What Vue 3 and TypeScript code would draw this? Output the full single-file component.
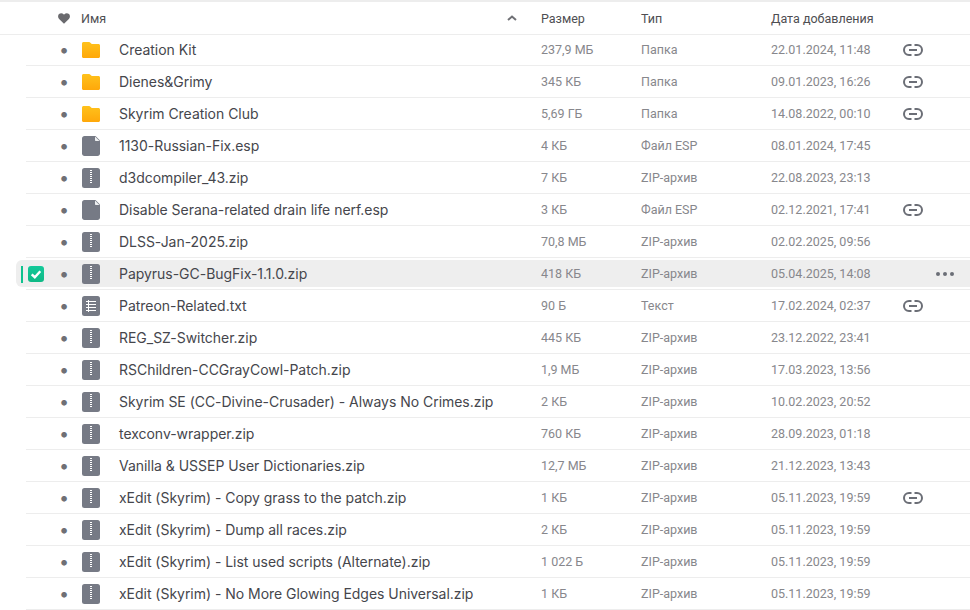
<script setup lang="ts">
type Kind = 'folder' | 'file' | 'zip' | 'text'
interface Row { name: string; size: string; type: string; date: string; kind: Kind; link?: boolean; selected?: boolean }
const rows: Row[] = [
  { name: 'Creation Kit', size: '237,9 МБ', type: 'Папка', date: '22.01.2024, 11:48', kind: 'folder', link: true },
  { name: 'Dienes&Grimy', size: '345 КБ', type: 'Папка', date: '09.01.2023, 16:26', kind: 'folder', link: true },
  { name: 'Skyrim Creation Club', size: '5,69 ГБ', type: 'Папка', date: '14.08.2022, 00:10', kind: 'folder', link: true },
  { name: '1130-Russian-Fix.esp', size: '4 КБ', type: 'Файл ESP', date: '08.01.2024, 17:45', kind: 'file' },
  { name: 'd3dcompiler_43.zip', size: '7 КБ', type: 'ZIP-архив', date: '22.08.2023, 23:13', kind: 'zip' },
  { name: 'Disable Serana-related drain life nerf.esp', size: '3 КБ', type: 'Файл ESP', date: '02.12.2021, 17:41', kind: 'file', link: true },
  { name: 'DLSS-Jan-2025.zip', size: '70,8 МБ', type: 'ZIP-архив', date: '02.02.2025, 09:56', kind: 'zip' },
  { name: 'Papyrus-GC-BugFix-1.1.0.zip', size: '418 КБ', type: 'ZIP-архив', date: '05.04.2025, 14:08', kind: 'zip', selected: true },
  { name: 'Patreon-Related.txt', size: '90 Б', type: 'Текст', date: '17.02.2024, 02:37', kind: 'text', link: true },
  { name: 'REG_SZ-Switcher.zip', size: '445 КБ', type: 'ZIP-архив', date: '23.12.2022, 23:41', kind: 'zip' },
  { name: 'RSChildren-CCGrayCowl-Patch.zip', size: '1,9 МБ', type: 'ZIP-архив', date: '17.03.2023, 13:56', kind: 'zip' },
  { name: 'Skyrim SE (CC-Divine-Crusader) - Always No Crimes.zip', size: '2 КБ', type: 'ZIP-архив', date: '10.02.2023, 20:52', kind: 'zip' },
  { name: 'texconv-wrapper.zip', size: '760 КБ', type: 'ZIP-архив', date: '28.09.2023, 01:18', kind: 'zip' },
  { name: 'Vanilla & USSEP User Dictionaries.zip', size: '12,7 МБ', type: 'ZIP-архив', date: '21.12.2023, 13:43', kind: 'zip' },
  { name: 'xEdit (Skyrim) - Copy grass to the patch.zip', size: '1 КБ', type: 'ZIP-архив', date: '05.11.2023, 19:59', kind: 'zip', link: true },
  { name: 'xEdit (Skyrim) - Dump all races.zip', size: '2 КБ', type: 'ZIP-архив', date: '05.11.2023, 19:59', kind: 'zip' },
  { name: 'xEdit (Skyrim) - List used scripts (Alternate).zip', size: '1 022 Б', type: 'ZIP-архив', date: '05.11.2023, 19:59', kind: 'zip' },
  { name: 'xEdit (Skyrim) - No More Glowing Edges Universal.zip', size: '1 КБ', type: 'ZIP-архив', date: '05.11.2023, 19:59', kind: 'zip' }
]
</script>

<template>
  <div class="page">
    <div class="head">
      <svg class="heart" width="12" height="11" viewBox="0 0 12 11"><path d="M6 10.800 1.100 5.900C-.3 4.500-.2 2.300 1 1.100 2.300-.2 4.400 0 5.600 1.200l.4.500.4-.5C7.600 0 9.700-.2 11 1.100c1.200 1.200 1.300 3.400-.1 4.800Z" fill="#6a6a6e"/></svg>
      <span class="head-name">
        <span>Имя</span>
        <svg class="sort" width="10" height="6" viewBox="0 0 10 6"><path d="M1 5 5 1.500 9 5" fill="none" stroke="#6f7075" stroke-width="2"/></svg>
      </span>
      <span>Размер</span>
      <span>Тип</span>
      <span>Дата добавления</span>
    </div>
    <div v-for="r in rows" :key="r.name" class="row-wrap">
      <div class="row" :class="{ selected: r.selected }">
        <span class="check-cell">
          <template v-if="r.selected">
            <i class="bar"></i>
            <svg class="check" width="16" height="16" viewBox="0 0 16 16">
              <defs><linearGradient id="cg" x1="0" y1="0" x2="0" y2="1"><stop offset="0" stop-color="#14c99a"/><stop offset="1" stop-color="#0fb985"/></linearGradient></defs>
              <rect width="16" height="16" rx="3" fill="url(#cg)"/>
              <path d="M3.700 8.300 6.800 11.200 12.300 5.200" fill="none" stroke="#fff" stroke-width="2.400"/>
            </svg>
          </template>
        </span>
        <span class="bullet">•</span>
        <span class="icon">
          <svg v-if="r.kind === 'folder'" width="18" height="16" viewBox="0 0 18 16">
            <defs><linearGradient id="fg" x1="0" y1="0" x2="0" y2="1"><stop offset="0" stop-color="#ffc21c"/><stop offset="1" stop-color="#ffa80a"/></linearGradient></defs>
            <path d="M1.500 0H6.500C7.500 0 8 .4 8.600 1L9.800 2H16.500C17.300 2 18 2.700 18 3.500V14.500C18 15.300 17.300 16 16.500 16H1.500C.7 16 0 15.300 0 14.500V1.500C0 .7.7 0 1.500 0Z" fill="url(#fg)"/>
          </svg>
          <svg v-else width="18" height="20" viewBox="0 0 18 20">
            <template v-if="r.kind === 'file'">
              <path d="M2.500 0H13.500L18 4.500V17.500C18 18.900 16.900 20 15.500 20H2.500C1.100 20 0 18.900 0 17.500V2.500C0 1.100 1.100 0 2.500 0Z" fill="#767a85"/>
              <path d="M13 .5 17.500 5H14C13.400 5 13 4.600 13 4Z" fill="#eef0f2"/>
            </template>
            <template v-else>
              <rect width="18" height="20" rx="2.500" fill="#767a85"/>
              <path v-if="r.kind === 'zip'" d="M9 2V15" stroke="#fff" stroke-width="2" stroke-dasharray="1 1" fill="none"/>
              <path v-else d="M4 5.500H14M4 8.500H14M4 11.500H14M4 14.500H14M6.500 4V16" stroke="#fff" stroke-width="1" fill="none"/>
            </template>
          </svg>
        </span>
        <span class="name">{{ r.name }}</span>
        <span class="cell">{{ r.size }}</span>
        <span class="cell">{{ r.type }}</span>
        <span class="cell">{{ r.date }}</span>
        <span class="action">
          <svg v-if="r.link" width="20" height="12" viewBox="0 0 20 12">
            <path d="M8.500 1H6A5 5 0 0 0 6 11H8.500M11.500 1H14A5 5 0 0 1 14 11H11.500M6 6H14" fill="none" stroke="#6b6e76" stroke-width="2"/>
          </svg>
        </span>
        <svg v-if="r.selected" class="more" width="18" height="4" viewBox="0 0 18 4"><circle cx="2" cy="2" r="2" fill="#6b6e76"/><circle cx="9" cy="2" r="2" fill="#6b6e76"/><circle cx="16" cy="2" r="2" fill="#6b6e76"/></svg>
      </div>
    </div>
  </div>
</template>

<style>
html, body { margin: 0; background: #fff; overflow: hidden; }
</style>

<style scoped>
.page {
  width: 970px;
  height: 610px;
  overflow: hidden;
  border-top: 2px solid #ededed;
  box-sizing: border-box;
  font-family: Roboto, "Liberation Sans", sans-serif;
}
.head {
  height: 33px;
  margin-bottom: -1px;
  padding-left: 58px;
  box-sizing: border-box;
  display: grid;
  grid-template-columns: 12px 471px 100px 130px 1fr;
  align-items: center;
  font-size: 12.500px;
  color: #4e4e52;
  border-bottom: 1px solid #ededed;
}
.heart { display: block; }
.head-name { display: flex; align-items: center; justify-content: space-between; padding: 0 24px 0 11px; }
.sort { display: block; }
.row-wrap {
  height: 32px;
  margin-left: 26px;
  padding-top: 1px;
  box-sizing: border-box;
  border-bottom: 1px solid #ededed;
}
.row {
  margin-left: -10px;
  height: 30px;
  display: grid;
  grid-template-columns: 40px 16px 10px 18px 19px 422px 100px 130px 132px 1fr;
  align-items: center;
  position: relative;
}
.row.selected {
  background: #eeeeee;
  border-radius: 6px 0 0 6px;
  height: 27px;
  margin-top: 1px;
  padding-top: 1px;
  box-sizing: border-box;
}
.check-cell { display: flex; align-items: center; padding-left: 5px; gap: 5px; }
.bar { width: 2px; height: 17px; background: #10c28e; }
.check { display: block; }
.bullet { font: 18px/1 Inter, sans-serif; color: #6f7075; text-align: center; }
.icon { grid-column: 4; display: flex; justify-content: center; }
.icon svg { display: block; }
.name { grid-column: 6; font: 14px Inter, sans-serif; letter-spacing: -0.030px; color: #45464c; white-space: nowrap; padding-bottom: 2px; }
.cell { font-size: 12.500px; color: #87878c; white-space: nowrap; padding-bottom: 2px; }
.action { display: flex; }
.action svg { display: block; }
.more { position: absolute; right: 16px; top: 12px; display: block; }
</style>
